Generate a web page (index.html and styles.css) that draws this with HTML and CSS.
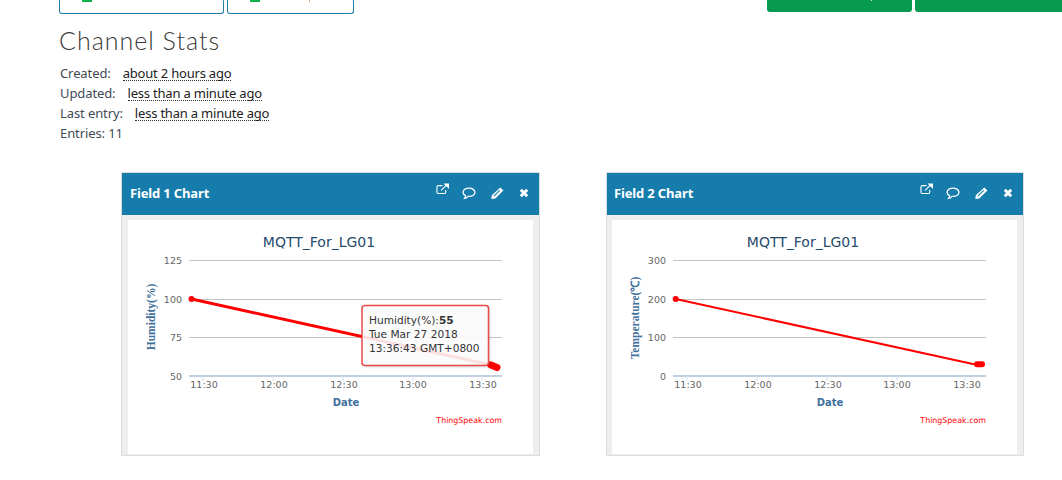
FILE: index.html
```html
<!DOCTYPE html>
<html lang="en">
<head>
<meta charset="utf-8">
<title>Channel Stats</title>
<link rel="stylesheet" href="styles.css">
</head>
<body>
<div class="toolbar">
  <div class="btn btn-outline btn-wide"><span class="plus"></span></div>
  <div class="btn btn-outline btn-narrow"><span class="plus"></span><span class="descender"></span></div>
  <div class="toolbar-right">
    <div class="btn btn-green btn-a"><span class="speck"></span></div>
    <div class="btn btn-green btn-b"></div>
  </div>
</div>

<h2 class="stats-title">Channel Stats</h2>
<ul class="stats">
  <li><span>Created:</span><abbr>about 2 hours ago</abbr></li>
  <li><span>Updated:</span><abbr>less than a minute ago</abbr></li>
  <li><span>Last entry:</span><abbr>less than a minute ago</abbr></li>
  <li><span>Entries: 11</span></li>
</ul>

<div class="cards">
  <section class="card">
    <header class="card-head">
      <h3>Field 1 Chart</h3>
      <div class="icons">
        <svg class="icon icon-up" width="13" height="12" viewBox="0 0 14 12"><path class="ln" d="M10.500 7v2.200a1.600 1.600 0 0 1-1.600 1.600H2.600A1.600 1.600 0 0 1 1 9.200V4a1.600 1.600 0 0 1 1.600-1.600H7"/><path class="ln" d="M5.500 7.500 11.500 1.600"/><path class="fl" d="M8 0h6v6z"/></svg>
        <svg class="icon icon-comment" width="14" height="13" viewBox="0 0 13 12"><path class="ln" d="M6.500 1C3.400 1 1 2.700 1 4.900c0 1.400 1 2.500 2.400 3.200-.1.900-.5 1.700-1 2.400 1.300-.2 2.500-.9 3.300-1.800h.8c3.100 0 5.500-1.700 5.500-3.800S9.600 1 6.500 1z"/></svg>
        <svg class="icon" width="13" height="12" viewBox="0 0 13 12"><path class="fl" d="M9.300.6 12.400 3.600 4.300 11.500.3 12 .8 8.200zM8.300 3 2.500 8.700l.8.800 5.800-5.700z"/></svg>
        <svg class="icon" width="10" height="10" viewBox="0 0 10 10"><path class="x" d="M1.800 1.800 8.200 8.200M8.200 1.800 1.800 8.200"/></svg>
      </div>
    </header>
    <div class="card-body">
      <div class="plot">
        <svg class="chart" width="405" height="234" viewBox="0 0 405 234">
          <text class="c-title" x="191" y="27">MQTT_For_LG01</text>
          <path class="grid" d="M61 40.500H374M61 79.500H374M61 117.500H374"/>
          <path class="axis" d="M61 156H374"/>
          <path class="tick" d="M75 156v5M145 156v5M215 156v5M285 156v5M354 156v5"/>
          <text class="y-lab" x="54" y="44">125</text>
          <text class="y-lab" x="54" y="83">100</text>
          <text class="y-lab" x="54" y="121">75</text>
          <text class="y-lab" x="54" y="160">50</text>
          <text class="x-lab" x="76" y="168">11:30</text>
          <text class="x-lab" x="146" y="168">12:00</text>
          <text class="x-lab" x="216" y="168">12:30</text>
          <text class="x-lab" x="285" y="168">13:00</text>
          <text class="x-lab" x="355" y="168">13:30</text>
          <text class="y-title" transform="translate(27 97) rotate(-90)">Humidity(%)</text>
          <text class="x-title" x="218" y="186">Date</text>
          <text class="credit" x="374" y="203">ThingSpeak.com</text>
          <path class="series thick" d="M63.500 79 362 144.800"/>
          <circle class="dot" cx="63.500" cy="79" r="3"/>
          <path class="cluster cluster-wide" d="M363 145 369 147.500"/>
          <rect class="tip" x="234" y="85.500" width="126.500" height="60" rx="3"/>
          <text class="tip-text" x="241" y="104">Humidity(%):<tspan class="tip-bold">55</tspan></text>
          <text class="tip-text" x="241" y="118">Tue Mar 27 2018</text>
          <text class="tip-text" x="241" y="132">13:36:43 GMT+0800</text>
        </svg>
      </div>
    </div>
  </section>

  <section class="card card-alt">
    <header class="card-head">
      <h3>Field 2 Chart</h3>
      <div class="icons">
        <svg class="icon icon-up" width="13" height="12" viewBox="0 0 14 12"><path class="ln" d="M10.500 7v2.200a1.600 1.600 0 0 1-1.600 1.600H2.600A1.600 1.600 0 0 1 1 9.200V4a1.600 1.600 0 0 1 1.600-1.600H7"/><path class="ln" d="M5.500 7.500 11.500 1.600"/><path class="fl" d="M8 0h6v6z"/></svg>
        <svg class="icon icon-comment" width="14" height="13" viewBox="0 0 13 12"><path class="ln" d="M6.500 1C3.400 1 1 2.700 1 4.900c0 1.400 1 2.500 2.400 3.200-.1.900-.5 1.700-1 2.400 1.300-.2 2.500-.9 3.300-1.800h.8c3.100 0 5.500-1.700 5.500-3.800S9.600 1 6.500 1z"/></svg>
        <svg class="icon" width="13" height="12" viewBox="0 0 13 12"><path class="fl" d="M9.300.6 12.400 3.600 4.300 11.500.3 12 .8 8.200zM8.300 3 2.500 8.700l.8.800 5.800-5.700z"/></svg>
        <svg class="icon" width="10" height="10" viewBox="0 0 10 10"><path class="x" d="M1.800 1.800 8.200 8.200M8.200 1.800 1.800 8.200"/></svg>
      </div>
    </header>
    <div class="card-body">
      <div class="plot">
        <svg class="chart" width="405" height="234" viewBox="0 0 405 234">
          <text class="c-title" x="191" y="27">MQTT_For_LG01</text>
          <path class="grid" d="M61 40.500H374M61 79.500H374M61 117.500H374"/>
          <path class="axis" d="M61 156H374"/>
          <path class="tick" d="M75 156v5M145 156v5M215 156v5M285 156v5M353 156v5"/>
          <text class="y-lab" x="54" y="44">300</text>
          <text class="y-lab" x="54" y="83">200</text>
          <text class="y-lab" x="54" y="121">100</text>
          <text class="y-lab" x="54" y="160">0</text>
          <text class="x-lab" x="76" y="168">11:30</text>
          <text class="x-lab" x="146" y="168">12:00</text>
          <text class="x-lab" x="216" y="168">12:30</text>
          <text class="x-lab" x="285" y="168">13:00</text>
          <text class="x-lab" x="355" y="168">13:30</text>
          <text class="y-title" transform="translate(27 98) rotate(-90)">Temperature(℃)</text>
          <text class="x-title" x="218" y="186">Date</text>
          <text class="credit" x="374" y="203">ThingSpeak.com</text>
          <path class="series" d="M63.700 79 362 144.300"/>
          <circle class="dot" cx="63.700" cy="79" r="3"/>
          <path class="cluster" d="M365 144.300H370"/>
        </svg>
      </div>
    </div>
  </section>
</div>
</body>
</html>
```
FILE: styles.css
```css
* { box-sizing: border-box; }

html, body {
  margin: 0;
  padding: 0;
  background: #fff;
  overflow: hidden;
}

body {
  width: 1062px;
  height: 480px;
  font-family: "Noto Sans", "Liberation Sans", sans-serif;
  font-size: 13px;
  color: #333;
}

/* Toolbar, scrolled mostly out of view */
.toolbar {
  display: flex;
  align-items: flex-start;
  gap: 3px;
  height: 15px;
  margin-top: -1px;
  padding-left: 59px;
}

.toolbar-right {
  display: flex;
  gap: 3px;
  margin-left: auto;
  height: 13px;
}

.btn {
  display: flex;
  align-items: flex-start;
  height: 100%;
  border-radius: 3px;
}

.btn-outline {
  border: 1px solid #1f7ba8;
  border-top: 0;
  background: #fff;
  padding-top: 1px;
}

.btn-wide { width: 165px; padding-left: 22px; }
.btn-narrow { width: 127px; padding-left: 22px; }

.plus {
  display: block;
  width: 10px;
  height: 1.500px;
  background: #10b04a;
}

.descender {
  display: block;
  width: 1px;
  height: 2px;
  margin-left: 49px;
  background: #e0a070;
}

.btn-green {
  background: #059a4e;
  border-radius: 0 0 3px 3px;
  padding-top: 1px;
}

.speck {
  display: block;
  width: 1px;
  height: 1px;
  margin-left: 104px;
  background: #cfe9da;
}

.btn-a { width: 145px; }
.btn-b { width: 147px; border-bottom-right-radius: 0; }

/* Stats */
.stats-title {
  margin: 11px 0 0 59px;
  font-family: "Lato", sans-serif;
  font-weight: 300;
  font-size: 25px;
  line-height: 30px;
  letter-spacing: 1px;
  color: #3a3a3a;
}

.stats {
  list-style: none;
  margin: 8px 0 0;
  padding: 0 0 0 60px;
  line-height: 20px;
  color: #3f4a55;
  letter-spacing: -0.1px;
}

.stats li {
  display: flex;
  gap: 12px;
  height: 20px;
}

.stats abbr {
  color: #222;
  height: 18px;
  line-height: 20px;
  letter-spacing: -0.2px;
  border-bottom: 1px dotted #333;
}

/* Chart cards */
.cards {
  display: grid;
  grid-template-columns: 419px 418px;
  column-gap: 66px;
  margin: 29px 0 0 121px;
}

.card {
  height: 284px;
  border: 1px solid #ddd;
  background: #eeeeec;
  display: flex;
  flex-direction: column;
}

.card-head {
  display: flex;
  align-items: center;
  justify-content: space-between;
  height: 42px;
  padding: 0 10px 2px 8px;
  background: #157cac;
  color: #fff;
}

.card-alt .card-head { padding-left: 7px; }

.card-head h3 {
  margin: 0;
  font-size: 13px;
  font-weight: 700;
  letter-spacing: -0.15px;
}

.icons {
  display: flex;
  align-items: center;
  gap: 15px;
}

.icon { display: block; }
.icon-up { margin: -8px -2px 0 0; }
.icon-comment { margin-top: 1px; }

.ln { fill: none; stroke: #fff; stroke-width: 1.2; }
.fl { fill: #fff; fill-rule: evenodd; }
.x { fill: none; stroke: #fff; stroke-width: 3; }

.card-body {
  flex: 1;
  padding: 5px 6px 1px;
  min-height: 0;
}

.card-alt .card-body { padding-left: 5px; }

.plot {
  height: 100%;
  background: #fff;
}

.chart {
  display: block;
  font-family: "DejaVu Sans", sans-serif;
}

.c-title {
  font-size: 14px;
  fill: #274b6d;
  text-anchor: middle;
}

.grid { fill: none; stroke: #c4c4c4; stroke-width: 1; }
.axis { fill: none; stroke: #c0d0e0; stroke-width: 2; }
.tick { fill: none; stroke: #d3dfe9; stroke-width: 1; }

.y-lab { font-size: 9.5px; fill: #666; text-anchor: end; }
.x-lab { font-size: 9.5px; fill: #666; text-anchor: middle; }

.y-title {
  font-family: "Liberation Serif", serif;
  font-size: 11.5px;
  font-weight: 700;
  fill: #41709c;
  text-anchor: middle;
}

.x-title {
  font-size: 10px;
  font-weight: 700;
  fill: #41709c;
  text-anchor: middle;
}

.credit { font-size: 7.9px; fill: #f00; text-anchor: end; }

.series { fill: none; stroke: #f00; stroke-width: 2; }
.thick { stroke-width: 3; }
.dot { fill: #f00; }
.cluster { fill: none; stroke: #f00; stroke-width: 6; stroke-linecap: round; }
.cluster-wide { stroke-width: 7; }

.tip {
  fill: rgba(255, 255, 255, 0.88);
  stroke: #e8494a;
  stroke-width: 1.5;
  filter: drop-shadow(1px 1px 1px rgba(0, 0, 0, 0.15));
}

.tip-text { font-size: 10.6px; fill: #333; }
.tip-bold { font-weight: 700; }
```
